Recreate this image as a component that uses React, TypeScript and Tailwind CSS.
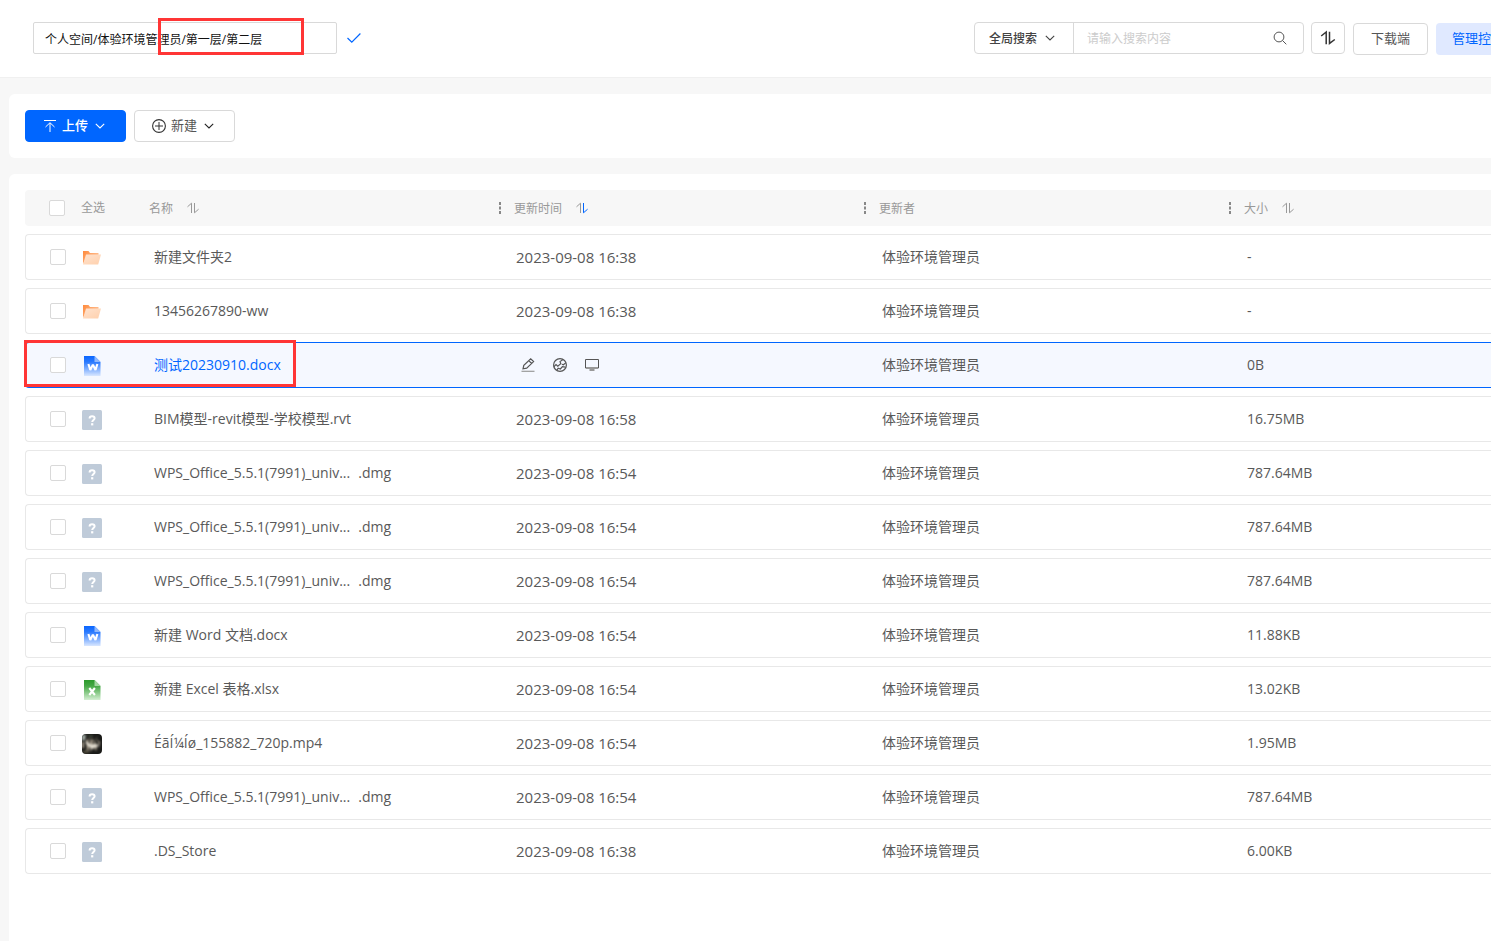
import React from "react";

type Kind = "folder" | "word" | "excel" | "unknown" | "video";

interface FileRow {
  id: number;
  kind: Kind;
  name: string;
  ext?: string;
  time: string;
  size: string;
  active?: boolean;
}

const OWNER = "体验环境管理员";

const FILES: FileRow[] = [
  { id: 1, kind: "folder", name: "新建文件夹2", time: "2023-09-08 16:38", size: "-" },
  { id: 2, kind: "folder", name: "13456267890-ww", time: "2023-09-08 16:38", size: "-" },
  { id: 3, kind: "word", name: "测试20230910.docx", time: "", size: "0B", active: true },
  { id: 4, kind: "unknown", name: "BIM模型-revit模型-学校模型.rvt", time: "2023-09-08 16:58", size: "16.75MB" },
  { id: 5, kind: "unknown", name: "WPS_Office_5.5.1(7991)_univ...", ext: ".dmg", time: "2023-09-08 16:54", size: "787.64MB" },
  { id: 6, kind: "unknown", name: "WPS_Office_5.5.1(7991)_univ...", ext: ".dmg", time: "2023-09-08 16:54", size: "787.64MB" },
  { id: 7, kind: "unknown", name: "WPS_Office_5.5.1(7991)_univ...", ext: ".dmg", time: "2023-09-08 16:54", size: "787.64MB" },
  { id: 8, kind: "word", name: "新建 Word 文档.docx", time: "2023-09-08 16:54", size: "11.88KB" },
  { id: 9, kind: "excel", name: "新建 Excel 表格.xlsx", time: "2023-09-08 16:54", size: "13.02KB" },
  { id: 10, kind: "video", name: "ÉãÍ¼Íø_155882_720p.mp4", time: "2023-09-08 16:54", size: "1.95MB" },
  { id: 11, kind: "unknown", name: "WPS_Office_5.5.1(7991)_univ...", ext: ".dmg", time: "2023-09-08 16:54", size: "787.64MB" },
  { id: 12, kind: "unknown", name: ".DS_Store", time: "2023-09-08 16:38", size: "6.00KB" },
];

function SortIcon({ className, down }: { className?: string; down?: string }) {
  return (
    <svg viewBox="0 0 12 12" fill="none" stroke="currentColor" className={className} aria-hidden="true">
      <path d="M0.5 4.8 4.5 1.2V11" />
      <path d="M7.5 1V10.8L11.6 7.2" stroke={down ?? "currentColor"} />
    </svg>
  );
}

function Chevron({ className }: { className?: string }) {
  return (
    <svg viewBox="0 0 10 10" fill="none" stroke="currentColor" className={className} aria-hidden="true">
      <path d="M0.8 2.8 5 7 9.2 2.8" strokeWidth="1.1" />
    </svg>
  );
}

function FolderIcon() {
  return (
    <svg viewBox="0 0 20 20" className="size-5" aria-hidden="true">
      <defs>
        <linearGradient id="folder-back" x1="0" y1="0" x2="1" y2="0.6">
          <stop offset="0" stopColor="#ff8a3c" />
          <stop offset="1" stopColor="#ffc59c" />
        </linearGradient>
        <linearGradient id="folder-front" x1="0" y1="0" x2="1" y2="1">
          <stop offset="0" stopColor="#ffe3cf" />
          <stop offset="1" stopColor="#ffd0ac" />
        </linearGradient>
      </defs>
      <path d="M1 3h5.5l1.5 2h8.5v4L3 12l-2 4z" fill="url(#folder-back)" />
      <path d="M4 6.5h15L16.2 16.5H1z" fill="url(#folder-front)" />
    </svg>
  );
}

function DocIcon({ kind }: { kind: "word" | "excel" }) {
  const word = kind === "word";
  const id = `doc-${kind}`;
  return (
    <svg viewBox="0 0 20 20" className="size-5" aria-hidden="true">
      <defs>
        <linearGradient id={id} x1="0" y1="0" x2="0" y2="1">
          <stop offset="0" stopColor={word ? "#0a66ff" : "#2c9a2c"} />
          <stop offset="0.3" stopColor={word ? "#2a7aff" : "#45a845"} />
          <stop offset="1" stopColor={word ? "#d9e7ff" : "#d5efd3"} />
        </linearGradient>
      </defs>
      <path d="M2 0h10.5L18.5 6v14H2z" fill={`url(#${id})`} />
      <path d="M12.5 0v6h6z" fill={word ? "#8db8ff" : "#a3d6a1"} />
      <path
        d={word ? "M6.4 8 8.3 14 10.9 8.6 13.5 14 15.4 8" : "M7.3 8 12.9 15M12.9 8 7.3 15"}
        fill="none"
        stroke="#fff"
        strokeWidth="2.1"
        strokeLinejoin="bevel"
      />
    </svg>
  );
}

function VideoThumb() {
  return (
    <svg viewBox="0 0 20 20" className="size-5 rounded" aria-hidden="true">
      <defs>
        <filter id="thumb-soft">
          <feGaussianBlur stdDeviation="0.8" />
        </filter>
      </defs>
      <rect width="20" height="20" fill="#1a1a18" />
      <g filter="url(#thumb-soft)">
        <path d="M0 1h4l-1 5-3 1z" fill="#a9b3ac" />
        <path d="M5 1h6v2H7zM13 2h3v1z" fill="#3d4438" />
        <path d="M0 8h2v6H0z" fill="#b3a999" />
        <path d="M4 6l2-1 1 10-2 2zM8 8l2-4 1 8-2 6zM12 6l2 3 1 7-2-2zM16 6l2 2-1 6z" fill="#b7ab98" />
        <path d="M3 8h3l3 3 3-1 5 1-2 2-5 2-4-3z" fill="#e6e0d3" />
        <path d="M7 4l1 3M11 5l1 3M14 4l1 3M6 13l2 4M12 13l2 4" stroke="#7f7767" fill="none" />
        <path d="M1 17l4-1 3 3H1z" fill="#55503f" />
      </g>
    </svg>
  );
}

function FileIcon({ kind }: { kind: Kind }) {
  if (kind === "folder") return <FolderIcon />;
  if (kind === "word" || kind === "excel") return <DocIcon kind={kind} />;
  if (kind === "video") return <VideoThumb />;
  return (
    <svg viewBox="0 0 20 20" className="size-5" aria-hidden="true">
      <rect width="20" height="20" rx="1.5" fill="#bfcbd9" />
      <path
        d="M7.6 8.4C7.6 6.8 8.6 6.2 10.1 6.2S12.6 6.9 12.6 8.2C12.6 9.9 10.2 10 10.2 12.1"
        fill="none"
        stroke="#fff"
        strokeWidth="2"
      />
      <rect x="9.1" y="13.2" width="2.2" height="2.2" fill="#fff" />
    </svg>
  );
}

function RowActions() {
  const button = "flex size-4 items-center justify-center text-[#555]";
  return (
    <div className="flex items-center gap-4 pl-1">
      <button type="button" aria-label="编辑" className={button}>
        <svg viewBox="0 0 16 16" fill="none" stroke="currentColor" strokeWidth="1.2" className="size-4">
          <path d="M3 11.8 3.8 8.3 10.7 1.8 13.6 4.6 6.7 11.2zM8.8 3.7 11.6 6.5" />
          <path d="M1.5 14.3h13" stroke="#999" />
        </svg>
      </button>
      <button type="button" aria-label="分享" className={button}>
        <svg viewBox="0 0 16 16" fill="none" stroke="currentColor" strokeWidth="1.2" className="size-4">
          <circle cx="8" cy="8" r="6.4" />
          <path d="M1.8 9.8 4 7.6 5.8 9.2 8.8 6.6 8 4.6 11 2.4M14 5.6 11.4 7.8 9.8 7.2M4.9 13.2 6.2 11.2 8.4 12 10.4 9.6 13.4 10.2" />
        </svg>
      </button>
      <button type="button" aria-label="打开" className={button}>
        <svg viewBox="0 0 16 16" fill="none" stroke="currentColor" className="size-4">
          <path d="M1.5 2.5h13v8.5h-13z" />
          <path d="M2 11h12M5.5 13h5" stroke="#999" strokeWidth="2" />
        </svg>
      </button>
    </div>
  );
}

function Checkbox({ label }: { label: string }) {
  return (
    <input
      type="checkbox"
      aria-label={label}
      className="size-4 shrink-0 appearance-none rounded-xs border border-[#d9d9d9] bg-white checked:border-[#0066ff] checked:bg-[#0066ff]"
    />
  );
}

function ColumnHead({ text, children }: { text: string; children?: React.ReactNode }) {
  return (
    <th scope="col" className="p-0 font-normal">
      <div className="flex items-center">
        <svg viewBox="0 0 4 12" className="mr-3 h-3 w-1" fill="#888" aria-hidden="true">
          <path d="M1 0h2v3H1zM1 4.5h2v3H1zM1 9h2v3H1z" />
        </svg>
        <span className="pt-px">{text}</span>
        {children}
      </div>
    </th>
  );
}

function TopBar() {
  return (
    <header className="flex items-start justify-between border-b border-[#f0f0f0] bg-white pt-[22px] pr-8 pb-[22px] pl-[33px]">
      <div className="relative flex items-center">
        <input
          aria-label="当前路径"
          defaultValue="个人空间/体验环境管理员/第一层/第二层"
          className="h-8 w-[304px] rounded-xs border border-[#d9d9d9] bg-white px-[11px] pt-px text-xs text-[#111] outline-none"
        />
        <button type="button" aria-label="确认" className="ml-2.5 text-[#0066ff]">
          <svg viewBox="0 0 14 14" fill="none" stroke="currentColor" className="size-3.5">
            <path d="M0.5 7 4.8 11.2 13.4 2.5" strokeWidth="1.2" />
          </svg>
        </button>
        <div className="pointer-events-none absolute -top-1 left-[125px] h-[37px] w-[146px] border-3 border-[#ff3535]" />
      </div>

      <div className="flex items-start gap-2">
        <div className="flex gap-[7px]">
          <div className="flex h-8 w-[330px] rounded-sm border border-[#d9d9d9] bg-white">
            <div className="relative flex w-[99px] shrink-0 items-center border-r border-[#d9d9d9]">
              <select
                aria-label="搜索范围"
                className="h-full w-full appearance-none bg-transparent pt-px pl-3.5 text-xs font-medium text-[#444] outline-none"
              >
                <option>全局搜索</option>
              </select>
              <Chevron className="pointer-events-none absolute right-[18px] size-2.5 text-[#444]" />
            </div>
            <input
              aria-label="搜索"
              placeholder="请输入搜索内容"
              className="min-w-0 flex-1 px-[13px] pt-px text-xs outline-none placeholder:text-[#ccc]"
            />
            <button type="button" aria-label="搜索文件" className="mr-4 text-[#555]">
              <svg viewBox="0 0 14 14" fill="none" stroke="currentColor" className="size-3.5">
                <circle cx="6" cy="6" r="4.9" />
                <path d="M9.5 9.5 13.3 13.3" />
              </svg>
            </button>
          </div>
          <button
            type="button"
            aria-label="传输列表"
            className="flex h-8 w-[34px] items-center justify-center rounded-sm border border-[#d9d9d9] bg-white text-[#333]"
          >
            <svg viewBox="0 0 16 16" fill="none" stroke="currentColor" strokeWidth="1.5" className="size-4">
              <path d="M1.2 6 6.2 2V14.2" />
              <path d="M9.5 1.8V13.4L14.8 9.5" />
            </svg>
          </button>
        </div>
        <div className="flex gap-2 pt-px text-[13px]">
          <button type="button" className="h-8 rounded-sm border border-[#d9d9d9] bg-white px-[17px] text-[#555]">
            下载端
          </button>
          <button type="button" className="h-8 rounded-sm bg-[#e0e9ff] px-4 text-[#0066ff]">
            管理控制台
          </button>
        </div>
      </div>
    </header>
  );
}

function Toolbar() {
  return (
    <section className="flex gap-2 rounded-md bg-white p-4 text-[13px]">
      <button
        type="button"
        className="flex h-8 w-[101px] items-center rounded-sm border border-[#0066ff] bg-[#0066ff] pl-[17px] font-medium text-white"
      >
        <svg viewBox="0 0 14 14" fill="none" stroke="currentColor" className="mr-[5px] size-3.5" aria-hidden="true">
          <path d="M1 1.5h12M7 13V4M2.5 8 7 3.7 11.5 8" />
        </svg>
        上传
        <Chevron className="ml-[7px] size-2.5" />
      </button>
      <button
        type="button"
        className="flex h-8 w-[101px] items-center rounded-sm border border-[#d9d9d9] bg-white pl-[17px] text-[#555]"
      >
        <svg viewBox="0 0 14 14" fill="none" stroke="#333" className="mr-[5px] size-3.5" aria-hidden="true">
          <circle cx="7" cy="7" r="6.4" strokeWidth="1.1" />
          <path d="M7 3v8M3 7h8" />
        </svg>
        新建
        <Chevron className="ml-[7px] size-2.5 text-[#222]" />
      </button>
    </section>
  );
}

function FileTable() {
  return (
    <table className="-my-2 w-full table-fixed border-separate border-spacing-x-0 border-spacing-y-2 text-left">
      <colgroup>
        <col className="w-[108px]" />
        <col className="w-[365px]" />
        <col className="w-[365px]" />
        <col className="w-[365px]" />
        <col />
      </colgroup>
      <thead className="text-xs text-[#999]">
        <tr className="h-9 bg-[#f7f7f7]">
          <th scope="col" className="rounded-l-sm p-0 pl-6 font-normal">
            <label className="flex items-center gap-4">
              <Checkbox label="全选" />
              全选
            </label>
          </th>
          <th scope="col" className="p-0 pl-4 font-normal">
            <div className="flex items-center">
              <span className="pt-px">名称</span>
              <SortIcon className="ml-3.5 size-3" />
            </div>
          </th>
          <ColumnHead text="更新时间">
            <SortIcon className="ml-3.5 size-3" down="#0066ff" />
          </ColumnHead>
          <ColumnHead text="更新者" />
          <ColumnHead text="大小">
            <SortIcon className="ml-3.5 size-3" />
          </ColumnHead>
        </tr>
      </thead>
      <tbody className="text-sm text-[#595959]">
        {FILES.map((file) => {
          const line = file.active ? "border-[#0066ff] bg-[#f5f8ff]" : "border-[#e8e8e8]";
          return (
            <tr key={file.id} className="h-[46px]">
              <td className={`relative rounded-l-sm border-y border-l p-0 pl-6 ${line}`}>
                <div className="flex items-center gap-4">
                  <Checkbox label={file.name} />
                  <span className="pt-0.5">
                    <FileIcon kind={file.kind} />
                  </span>
                </div>
                {file.active && (
                  <div className="pointer-events-none absolute -top-[3px] -left-0.5 z-10 h-[47px] w-[272px] border-3 border-[#ff3535]" />
                )}
              </td>
              <td className={`border-y p-0 pl-[21px] whitespace-nowrap ${line}`}>
                <a href="#" className={file.active ? "text-[#0066ff]" : ""}>
                  <span>{file.name}</span>
                  {file.ext && <span className="ml-2">{file.ext}</span>}
                </a>
              </td>
              <td className={`border-y p-0 pl-[18px] text-[15px] leading-5 ${line}`}>
                {file.active ? <RowActions /> : file.time}
              </td>
              <td className={`border-y p-0 pl-[19px] ${line}`}>{OWNER}</td>
              <td className={`rounded-r-sm border-y border-r p-0 pl-[19px] ${line}`}>{file.size}</td>
            </tr>
          );
        })}
      </tbody>
    </table>
  );
}

export default function App() {
  return (
    <div className="min-h-screen overflow-x-hidden bg-[#f7f7f7] font-['Open_Sans','Noto_Sans_CJK_SC',sans-serif]">
      <div className="flex min-h-screen min-w-[1565px] flex-col">
        <TopBar />
        <main className="flex flex-1 flex-col gap-4 pt-4 pl-[9px]">
          <Toolbar />
          <section className="flex-1 rounded-t-md bg-white p-4">
            <FileTable />
          </section>
        </main>
      </div>
    </div>
  );
}
